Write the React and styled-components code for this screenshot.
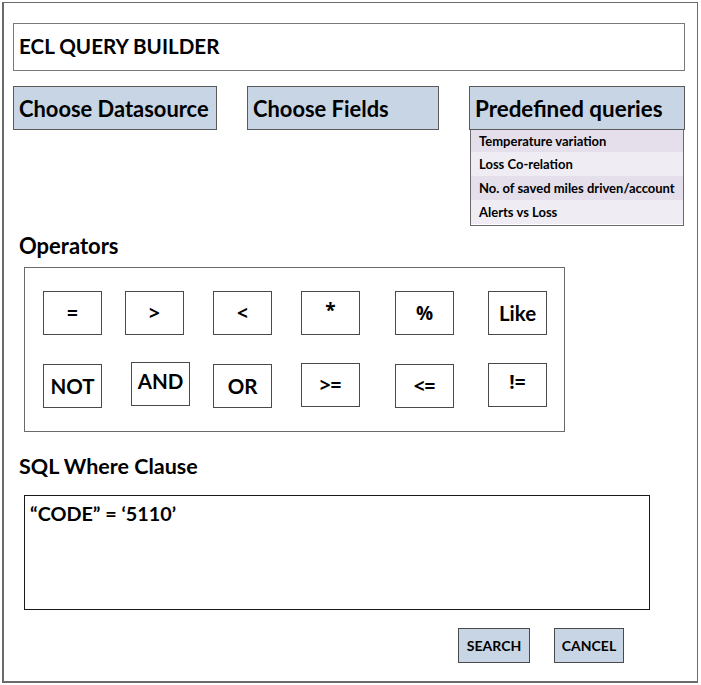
import React from "react";
import styled, { createGlobalStyle } from "styled-components";

const Global = createGlobalStyle`
  html, body { margin: 0; padding: 0; background: #fff; }
  body { font-family: "Lato", "Open Sans", sans-serif; color: #000; }
`;

const Frame = styled.div`
  box-sizing: border-box;
  margin: 2px 0 0 2px;
  width: 696px;
  height: 681px;
  border: 2px solid #6b6b6b;
  border-top-width: 1px;
  border-right-width: 1px;
  padding: 20px 0 0 9px;
  display: flex;
  flex-direction: column;
`;

const TitleBar = styled.div`
  box-sizing: border-box;
  width: 672px;
  height: 48px;
  border: 1px solid #7a7a7a;
  padding: 0 0 2px 5px;
  display: flex;
  align-items: center;
  font-size: 20.6px;
  font-weight: 700;
`;

const ChoiceRow = styled.div`
  display: flex;
  gap: 30px;
  margin-top: 15px;
  align-items: flex-start;
`;

const Column = styled.div`
  display: flex;
  flex-direction: column;
`;

const BlueButton = styled.div`
  box-sizing: border-box;
  width: ${(p) => p.$w}px;
  height: 44px;
  background: #c8d5e4;
  border: 1px solid #5a5a5a;
  padding-left: 5px;
  display: flex;
  align-items: center;
  font-size: ${(p) => p.$fs || 21.9}px;
  font-weight: 700;
  white-space: nowrap;
`;

const Dropdown = styled.div`
  box-sizing: border-box;
  width: 214px;
  margin-left: 1px;
  border: 1px solid #6a6a6a;
  border-top: none;
  padding-bottom: 1px;
`;

const DropItem = styled.div`
  height: ${(p) => (p.$first ? 22 : 24)}px;
  background: ${(p) => (p.$dark ? "#e4dfeb" : "#efedf3")};
  padding-left: 8px;
  display: flex;
  align-items: center;
  font-size: 13px;
  font-weight: 700;
  white-space: nowrap;
`;

const SectionLabel = styled.div`
  margin-top: ${(p) => p.$mt}px;
  padding-left: 6px;
  height: 24px;
  line-height: 24px;
  font-size: ${(p) => p.$fs}px;
  font-weight: 700;
`;

const OperatorPanel = styled.div`
  box-sizing: border-box;
  margin: 9px 0 0 11px;
  width: 541px;
  height: 165px;
  border: 1px solid #6a6a6a;
  padding: 23px 0 0 18px;
  display: grid;
  grid-template-columns: 82px 88px 88px 94px 93px 59px;
  grid-template-rows: 72px 46px;
  align-items: start;
`;

const OpButton = styled.div`
  box-sizing: border-box;
  width: 59px;
  height: 44px;
  margin-left: ${(p) => p.$dx || 0}px;
  margin-top: ${(p) => p.$dy || 0}px;
  border: 1px solid #4a4a4a;
  display: flex;
  align-items: center;
  justify-content: center;
  font-family: ${(p) => (p.$sym ? '"Open Sans", sans-serif' : '"Lato", sans-serif')};
  font-size: ${(p) => (p.$sym ? 19 : 20.5)}px;
  font-weight: 700;
  padding-bottom: ${(p) => (p.$raise ? 6 : 0)}px;
`;

const ClauseBox = styled.div`
  box-sizing: border-box;
  margin: 17px 0 0 11px;
  width: 626px;
  height: 115px;
  border: 1px solid #1a1a1a;
  padding: 5px 0 0 5px;
  font-size: 19.8px;
  font-weight: 700;
`;

const ActionRow = styled.div`
  display: flex;
  gap: 24px;
  margin: 18px 0 0 445px;
`;

const ActionButton = styled.div`
  box-sizing: border-box;
  width: ${(p) => p.$w}px;
  height: 35px;
  background: #c8d5e4;
  border: 1px solid #4a4a4a;
  display: flex;
  align-items: center;
  justify-content: center;
  font-size: 14px;
  font-weight: 700;
`;

const queries = [
  "Temperature variation",
  "Loss Co-relation",
  "No. of saved miles driven/account",
  "Alerts vs Loss",
];

const row1 = [
  { t: "=", sym: true },
  { t: ">", sym: true },
  { t: "<", sym: true },
  { t: "*", sym: true, raise: true },
  { t: "%", sym: true },
  { t: "Like" },
];
const row2 = [
  { t: "NOT", dy: 1 },
  { t: "AND", dx: 6, dy: -1, raise: true },
  { t: "OR", dy: 1 },
  { t: ">=", sym: true },
  { t: "<=", sym: true, dy: 1 },
  { t: "!=", sym: true, raise: true },
];

export default function App() {
  return (
    <>
      <Global />
      <Frame>
        <TitleBar>ECL QUERY BUILDER</TitleBar>
        <ChoiceRow>
          <BlueButton $w={204}>Choose Datasource</BlueButton>
          <BlueButton $w={192}>Choose Fields</BlueButton>
          <Column>
            <BlueButton $w={216} $fs={22.4}>
              Predefined queries
            </BlueButton>
            <Dropdown>
              {queries.map((q, i) => (
                <DropItem key={q} $first={i === 0} $dark={i % 2 === 0}>
                  {q}
                </DropItem>
              ))}
            </Dropdown>
          </Column>
        </ChoiceRow>
        <SectionLabel $mt={8} $fs={22}>
          Operators
        </SectionLabel>
        <OperatorPanel>
          {[...row1, ...row2].map((o) => (
            <OpButton
              key={o.t}
              $sym={o.sym}
              $dx={o.dx}
              $dy={o.dy}
              $raise={o.raise}
            >
              {o.t}
            </OpButton>
          ))}
        </OperatorPanel>
        <SectionLabel $mt={22} $fs={21.5}>
          SQL Where Clause
        </SectionLabel>
        <ClauseBox>“CODE” = ‘5110’</ClauseBox>
        <ActionRow>
          <ActionButton $w={72}>SEARCH</ActionButton>
          <ActionButton $w={70}>CANCEL</ActionButton>
        </ActionRow>
      </Frame>
    </>
  );
}
